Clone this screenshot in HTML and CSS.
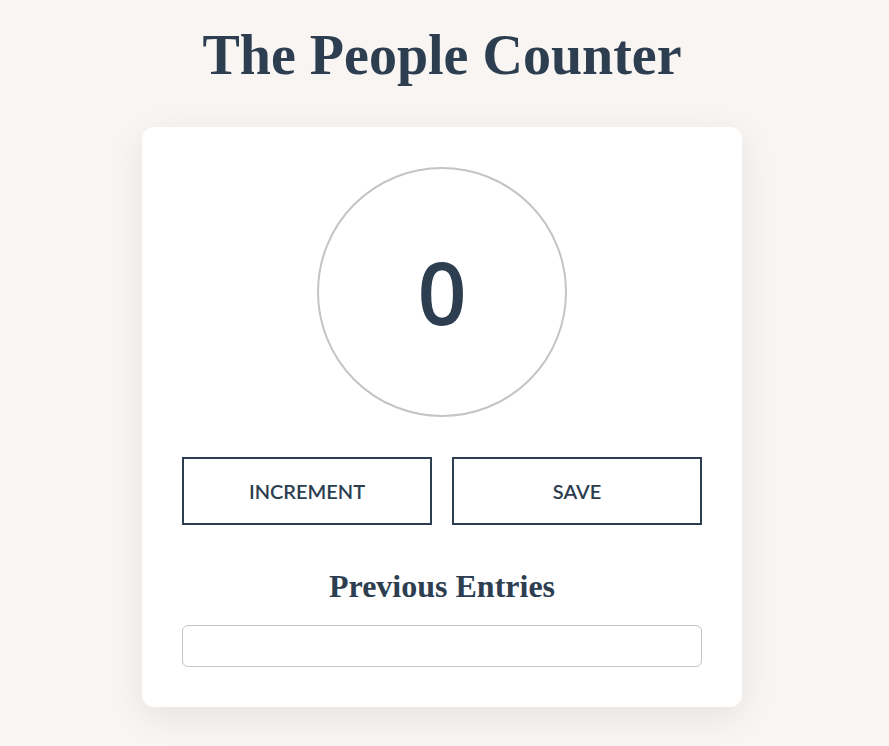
FILE: index.html
```html
<!DOCTYPE html>
<html lang="en">
<head>
<meta charset="utf-8">
<title>The People Counter</title>
<link rel="stylesheet" href="styles.css">
</head>
<body>
<main class="page">
  <h1 class="title">The People Counter</h1>
  <section class="card">
    <div class="counter"><span class="count">0</span></div>
    <div class="actions">
      <button class="btn">INCREMENT</button>
      <button class="btn">SAVE</button>
    </div>
    <h2 class="subtitle">Previous Entries</h2>
    <div class="entries"></div>
  </section>
</main>
</body>
</html>
```

FILE: styles.css
```css
* { box-sizing: border-box; }
html, body { margin: 0; padding: 0; }
body {
  background: #f8f5f2;
  color: #2c3e50;
  font-family: "Lato", "Open Sans", sans-serif;
}
.page {
  display: flex;
  flex-direction: column;
  align-items: center;
  padding: 22px 5px 60px 0;
}
.title {
  margin: 0;
  font-family: "Liberation Serif", "DejaVu Serif", serif;
  font-weight: 700;
  font-size: 56px;
  line-height: 66px;
  color: #2c3e50;
}
.card {
  margin-top: 39px;
  width: 600px;
  background: #ffffff;
  border-radius: 12px;
  padding: 40px;
  box-shadow: 0 10px 36px rgba(0, 0, 0, 0.08);
  display: flex;
  flex-direction: column;
  align-items: center;
}
.counter {
  width: 250px;
  height: 250px;
  border: 2px solid #c4c4c4;
  border-radius: 50%;
  display: flex;
  align-items: center;
  justify-content: center;
}
.count {
  font-family: "Open Sans", sans-serif;
  font-weight: 600;
  font-size: 86px;
  line-height: 1;
  color: #2c3e50;
}
.actions {
  margin-top: 40px;
  width: 100%;
  display: grid;
  grid-template-columns: 1fr 1fr;
  gap: 20px;
}
.btn {
  height: 68px;
  background: #ffffff;
  border: 2px solid #2c3e50;
  color: #2c3e50;
  font-family: "Lato", sans-serif;
  font-weight: 600;
  font-size: 20px;
  cursor: pointer;
}
.subtitle {
  margin: 43px 0 0;
  font-family: "Liberation Serif", serif;
  font-weight: 700;
  font-size: 32px;
  line-height: 36px;
  color: #2c3e50;
}
.entries {
  margin-top: 21px;
  width: 100%;
  height: 42px;
  border: 1px solid #c4c4c4;
  border-radius: 6px;
}
```
